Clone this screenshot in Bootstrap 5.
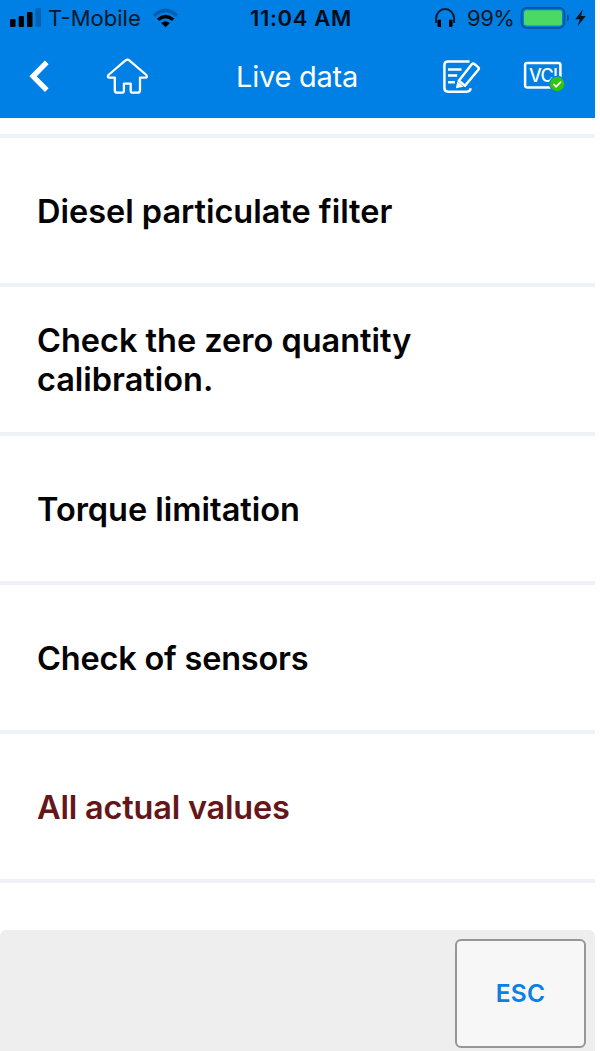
<!DOCTYPE html>
<html lang="en">
<head>
<meta charset="utf-8">
<meta name="viewport" content="width=device-width, initial-scale=1">
<title>Live data</title>
<link href="https://cdn.jsdelivr.net/npm/bootstrap@5.3.0/dist/css/bootstrap.min.css" rel="stylesheet">
<style>
body{font-family:Inter,"Liberation Sans",sans-serif;background:#fff}
.phone{width:595px;height:1051px}
.topbar{height:118px;background:#007fe5}
.status{height:36px;font-size:22px;line-height:36px;color:#0a1826;white-space:nowrap}
.titlebar{height:82px;color:#fff}
.carrier{width:106px;padding-left:6px;letter-spacing:0}
.clock{width:104px;margin-left:70px;color:#000c1a;font-weight:600;letter-spacing:.65px}
.percent{width:53px;letter-spacing:-.5px}
.screen-title{width:126px;padding-top:21px;font-size:29px;line-height:40px;letter-spacing:-.25px;white-space:nowrap}
.bare{padding:0;border:0;background:none;line-height:0}
.rows{padding-top:16px}
.rows .list-group-item{height:149px;border:0;border-top:4px solid #eef1f5;padding:1px 37px 0;color:#030303;font-size:32.5px;line-height:39px;font-weight:600;letter-spacing:-.02px;background:#fff}
.rows .list-group-item.tight{letter-spacing:-.2px}
.rows .list-group-item.all-values{color:#651618}
.rows .label-text{max-width:430px}
.rows .rows-end{height:51px}
.toolbar{height:121px;background:#eee;border-radius:6px 6px 0 0;padding:9px 9px 3px 0}
.esc{width:131px;height:109px;border:2px solid #969696;border-radius:6px;background:#f7f7f7;color:#0880e6;font-size:24.5px;font-weight:600;letter-spacing:.3px;padding:0}
</style>
</head>
<body>
<div class="phone d-flex flex-column overflow-hidden">
  <header class="topbar flex-shrink-0">
    <div class="status d-flex">
      <svg width="42" height="36" viewBox="0 0 42 36"><g fill="#000"><rect x="10" y="19" width="5.5" height="8" rx="1.3"/><rect x="18.7" y="16" width="5.3" height="11" rx="1.3"/><rect x="27" y="12" width="5.5" height="15" rx="1.3"/></g><rect x="35.5" y="8" width="5.5" height="19" rx="1.3" fill="#0062b4"/></svg>
      <span class="carrier">T-Mobile</span>
      <svg width="32" height="36" viewBox="148 0 32 36"><path d="M152.8 14.4Q165.5 2.4 178.3 14.4L176 17Q165.500 7.500 155.200 17Z" fill="#0060b0"/><path d="M156.800 18.500Q165.500 11.100 174.400 18.500L172 21Q165.500 15.600 159.200 21Z" fill="#000"/><path d="M161.200 23.100Q165.500 19.600 169.900 23.100L165.500 27.200Z" fill="#000"/></svg>
      <span class="clock">11:04 AM</span>
      <svg class="ms-auto" width="30" height="36" viewBox="433 0 30 36"><path d="M436.100 23V18.500a9 9.500 0 0 1 18 0V23" fill="none" stroke="#071829" stroke-width="1.900"/><path d="M437.500 19.700h3.500V27h-2.300q-1.200 0-1.200-1.200zM449 19.700h3.500v6.100q0 1.200-1.200 1.200H449z" fill="#000"/></svg>
      <span class="percent ps-1">99%</span>
      <svg width="79" height="36" viewBox="516 0 79 36"><rect x="521.600" y="7.900" width="42.800" height="19.900" rx="5" fill="none" stroke="#005398" stroke-width="1.800"/><rect x="524" y="10.300" width="38" height="15.100" rx="2.500" fill="#4bd964"/><path d="M567 14.200q2.200 1 2.200 3.700t-2.200 3.700z" fill="#005398"/><path d="M582.800 9.400 575.200 19.200h4.500L577.700 26.200 585.700 16.100h-4.600z" fill="#071522"/></svg>
    </div>
    <nav class="titlebar d-flex" aria-label="Main">
      <button class="bare" aria-label="Back"><svg width="90" height="82" viewBox="0 36 90 82"><path d="M46.800 62.300 33 76.300 46.800 90.200" fill="none" stroke="#fff" stroke-width="5.200"/></svg></button>
      <button class="bare" aria-label="Home"><svg width="146" height="82" viewBox="90 36 146 82"><path d="M127.400 59.600q1 0 1.900.8L146.400 75q1.500 2.600-1.200 2.600H140V90.200q0 2.500-2.500 2.500h-4.800q-2 0-2-2V83.600h-6.800v7.100q0 2-2 2h-4.600q-2.500 0-2.500-2.500V77.600h-5.200q-2.700 0-1.200-2.600L125.500 60.400q.9-.8 1.900-.8Z" fill="none" stroke="#fff" stroke-width="2.300" stroke-linejoin="round"/></svg></button>
      <div class="screen-title">Live data</div>
      <button class="bare ms-auto" aria-label="Edit"><svg width="85" height="82" viewBox="430 36 85 82"><g fill="none" stroke="#fff" stroke-width="2.500"><path d="M469.500 61.500H448q-3.600 0-3.600 3.600v23q0 3.600 3.600 3.600h18.500q4-.2 4-3.500"/><path d="M448 69.500h13.500M448 75.600h9.200M448 82.200h7"/><path d="m458.800 80.700 13-16.400q1.200-1.400 2.600-.3l3.700 3.100q1.400 1.200.2 2.600L465 85.800Z" stroke-linejoin="round"/></g><path d="M457.400 81.500 463.600 86.800 455.800 88.200Z" fill="#fff"/></svg></button>
      <button class="bare" aria-label="VCI connected"><svg width="80" height="82" viewBox="515 36 80 82"><rect x="525.100" y="63.100" width="35.300" height="24.300" rx="1.800" fill="none" stroke="#fff" stroke-width="2.500"/><text x="529" y="81.500" font-family="Inter,sans-serif" font-size="18" font-weight="500" fill="#fff" textLength="29">VCI</text><circle cx="557.200" cy="84" r="8.200" fill="#007fe5"/><circle cx="557.200" cy="84" r="7.200" fill="#2fc60c"/><path d="m553.400 84 2.700 2.700 5-5" fill="none" stroke="#fff" stroke-width="1.700"/></svg></button>
    </nav>
  </header>
  <main class="rows list-group list-group-flush flex-grow-1">
    <div class="list-group-item d-flex align-items-center"><span class="label-text">Diesel particulate filter</span></div>
    <div class="list-group-item d-flex align-items-center"><span class="label-text">Check the zero quantity calibration.</span></div>
    <div class="list-group-item d-flex align-items-center"><span class="label-text">Torque limitation</span></div>
    <div class="list-group-item tight d-flex align-items-center"><span class="label-text">Check of sensors</span></div>
    <div class="list-group-item tight all-values d-flex align-items-center"><span class="label-text">All actual values</span></div>
    <div class="list-group-item rows-end"></div>
  </main>
  <footer class="toolbar d-flex justify-content-end flex-shrink-0">
    <button class="esc">ESC</button>
  </footer>
</div>
<script src="https://cdn.jsdelivr.net/npm/bootstrap@5.3.0/dist/js/bootstrap.bundle.min.js"></script>
</body>
</html>
